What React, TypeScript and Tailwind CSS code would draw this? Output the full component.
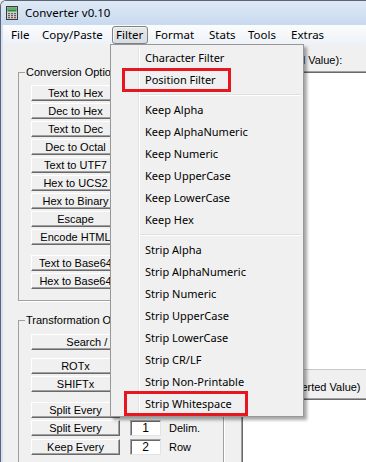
import React from "react";

const menuItems: (string | null)[] = [
  "Character Filter",
  "Position Filter",
  null,
  "Keep Alpha",
  "Keep AlphaNumeric",
  "Keep Numeric",
  "Keep UpperCase",
  "Keep LowerCase",
  "Keep Hex",
  null,
  "Strip Alpha",
  "Strip AlphaNumeric",
  "Strip Numeric",
  "Strip UpperCase",
  "Strip LowerCase",
  "Strip CR/LF",
  "Strip Non-Printable",
  "Strip Whitespace",
];

const conversionTop = [
  "Text to Hex",
  "Dec to Hex",
  "Text to Dec",
  "Dec to Octal",
  "Text to UTF7",
  "Hex to UCS2",
  "Hex to Binary",
  "Escape",
  "Encode HTML",
];

const Btn = ({ label, wide = false, className = "" }: { label: string; wide?: boolean; className?: string }) => (
  <div
    className={`${wide ? "w-[155px]" : "w-[89px]"} h-[16px] shrink-0 bg-[#f0f0f0] border border-t-white border-l-white border-r-[#696969] border-b-[#696969] shadow-[inset_-1px_-1px_0_#a0a0a0] text-center text-[11px] leading-[14px] text-black whitespace-nowrap ${className}`}
  >
    {label}
  </div>
);

const NumBox = ({ value }: { value: string }) => (
  <div className="w-[31px] h-[16px] ml-[10px] bg-white border border-t-[#a0a0a0] border-l-[#a0a0a0] border-r-[#e3e3e3] border-b-[#e3e3e3] shadow-[inset_1px_1px_0_#696969] text-center text-[12px] leading-[14px] text-black">
    {value}
  </div>
);

const CalcIcon = () => (
  <svg width="12" height="14" viewBox="0 0 12 14">
    <rect x="0.5" y="0.5" width="11" height="13" fill="#cfcfcf" stroke="#3b3b3b" />
    <rect x="1.5" y="1.5" width="9" height="4" fill="#2d8a3c" />
    <rect x="2" y="2.5" width="8" height="1" fill="#8fd49a" />
    {[7, 9, 11].map((y) =>
      [2, 5, 8].map((x) => (
        <rect key={`${x}-${y}`} x={x} y={y} width="2" height="1.2" fill={x === 8 && y === 11 ? "#c83a3a" : "#5f5f5f"} />
      ))
    )}
  </svg>
);

export default function App() {
  return (
    <div className="w-[366px] h-[462px] overflow-hidden relative bg-[#f0f0f0] font-['Liberation_Sans',Arial,sans-serif]">
      <div className="w-[420px] h-[462px] flex flex-col border-l border-t border-[#5b6677] rounded-tl-[6px] overflow-hidden">
        {/* Title bar */}
        <div className="h-[24px] shrink-0 flex items-center pl-[5px] bg-gradient-to-b from-[#dfe9f6] to-[#c8daef]">
          <CalcIcon />
          <span className="ml-[7px] font-['Noto_Sans',sans-serif] text-[11.5px] text-black">Converter v0.10</span>
        </div>

        <div className="flex-1 flex flex-col border-l-2 border-[#d3e1f1]">
          {/* Menu bar */}
          <div className="h-[20px] shrink-0 flex items-start pl-[4px] bg-gradient-to-b from-[#fbfcfd] to-[#edf1f6] font-['Noto_Sans',sans-serif] text-[11.5px] text-black">
            <div className="w-[31px] h-[20px] pl-[4px] leading-[20px]">File</div>
            <div className="w-[74px] h-[20px] pl-[4px] leading-[20px]">Copy/Paste</div>
            <div className="w-[36px] h-[18px] mt-[1px] mr-[3px] pl-[3px] leading-[16px] rounded-[3px] border border-[#7c8288] bg-gradient-to-b from-[#e8e8e8] to-[#d8dce2] shadow-[inset_1px_1px_0_#f4f4f4]">
              Filter
            </div>
            <div className="w-[54px] h-[20px] pl-[4px] leading-[20px]">Format</div>
            <div className="w-[39px] h-[20px] pl-[4px] leading-[20px]">Stats</div>
            <div className="w-[43px] h-[20px] pl-[4px] leading-[20px]">Tools</div>
            <div className="w-[50px] h-[20px] pl-[4px] leading-[20px]">Extras</div>
          </div>

          {/* Client area */}
          <div className="flex-1 flex bg-[#f0f0f0]">
            {/* Left column: option groups */}
            <div className="w-[233px] shrink-0 pl-[15px] flex flex-col">
              <fieldset className="mt-[21px] w-[110px] border border-[#a0a0a0] shadow-[1px_1px_0_#fff]">
                <legend className="ml-[6px] px-[1px] text-[11px] leading-[12px] text-black whitespace-nowrap">
                  Conversion Options
                </legend>
                <div className="pt-[7px] pl-[12px] pb-[11px] flex flex-col gap-[2px]">
                  {conversionTop.map((b) => (
                    <Btn key={b} label={b} />
                  ))}
                  <Btn label="Text to Base64" className="mt-[8px]" />
                  <Btn label="Hex to Base64" />
                </div>
              </fieldset>

              <fieldset className="mt-[13px] w-[206px] h-[200px] border border-[#a0a0a0] shadow-[1px_1px_0_#fff]">
                <legend className="ml-[6px] px-[1px] text-[11px] leading-[12px] text-black whitespace-nowrap">
                  Transformation Options
                </legend>
                <div className="pt-[8px] pl-[12px] flex flex-col gap-[2px]">
                  <Btn label="Search / Replace" wide />
                  <Btn label="ROTx" className="mt-[6px]" />
                  <Btn label="SHIFTx" />
                  <Btn label="Split Every" className="mt-[8px]" />
                  <div className="flex items-center">
                    <Btn label="Split Every" />
                    <NumBox value="1" />
                    <span className="ml-[8px] text-[11px] text-black">Delim.</span>
                  </div>
                  <div className="flex items-center">
                    <Btn label="Keep Every" />
                    <NumBox value="2" />
                    <span className="ml-[8px] text-[11px] text-black">Row</span>
                  </div>
                </div>
              </fieldset>
            </div>

            {/* Right column: input / output */}
            <div className="flex-1 flex flex-col pt-[9px]">
              <div className="text-[11px] leading-[13px] text-black whitespace-nowrap">Input (Original Value):</div>
              <div className="mt-[4px] ml-[5px] h-[299px] bg-white border border-t-[#a0a0a0] border-l-[#a0a0a0] border-r-[#e3e3e3] border-b-[#c8c8c8] shadow-[inset_1px_1px_0_#696969]" />
              <div className="mt-[11px] text-[11px] leading-[13px] text-black whitespace-nowrap">Output (Converted Value)</div>
              <div className="mt-[4px] ml-[5px] flex-1 bg-white border border-t-[#a0a0a0] border-l-[#a0a0a0] border-r-[#e3e3e3] shadow-[inset_1px_1px_0_#696969]" />
            </div>
          </div>
        </div>
      </div>

      {/* Filter drop-down menu */}
      <div className="absolute left-[110px] top-[44px] w-[194px] bg-[#f0f0f0] border border-[#979797] pt-[2px] pb-[1px] shadow-[3px_3px_3px_0_rgba(0,0,0,0.35)] font-['Noto_Sans',sans-serif] text-[11px] text-black">
        <div className="absolute left-[27px] top-[2px] bottom-[2px] w-[2px] border-l border-r border-l-[#e2e3e3] border-r-white" />
        {menuItems.map((item, i) =>
          item === null ? (
            <div key={i} className="h-[8px] flex items-center pl-[29px] pr-[2px]">
              <div className="flex-1 h-[2px] border-t border-b border-t-[#e0e0e0] border-b-white" />
            </div>
          ) : (
            <div key={i} className="h-[22px] flex items-center pl-[34px] whitespace-nowrap">
              {item}
            </div>
          )
        )}
      </div>

      {/* Red annotation boxes */}
      <div className="absolute left-[122px] top-[68px] w-[109px] h-[24px] border-[3px] border-[#e8161f]" />
      <div className="absolute left-[124px] top-[391px] w-[124px] h-[25px] border-[3px] border-[#e8161f]" />
    </div>
  );
}
